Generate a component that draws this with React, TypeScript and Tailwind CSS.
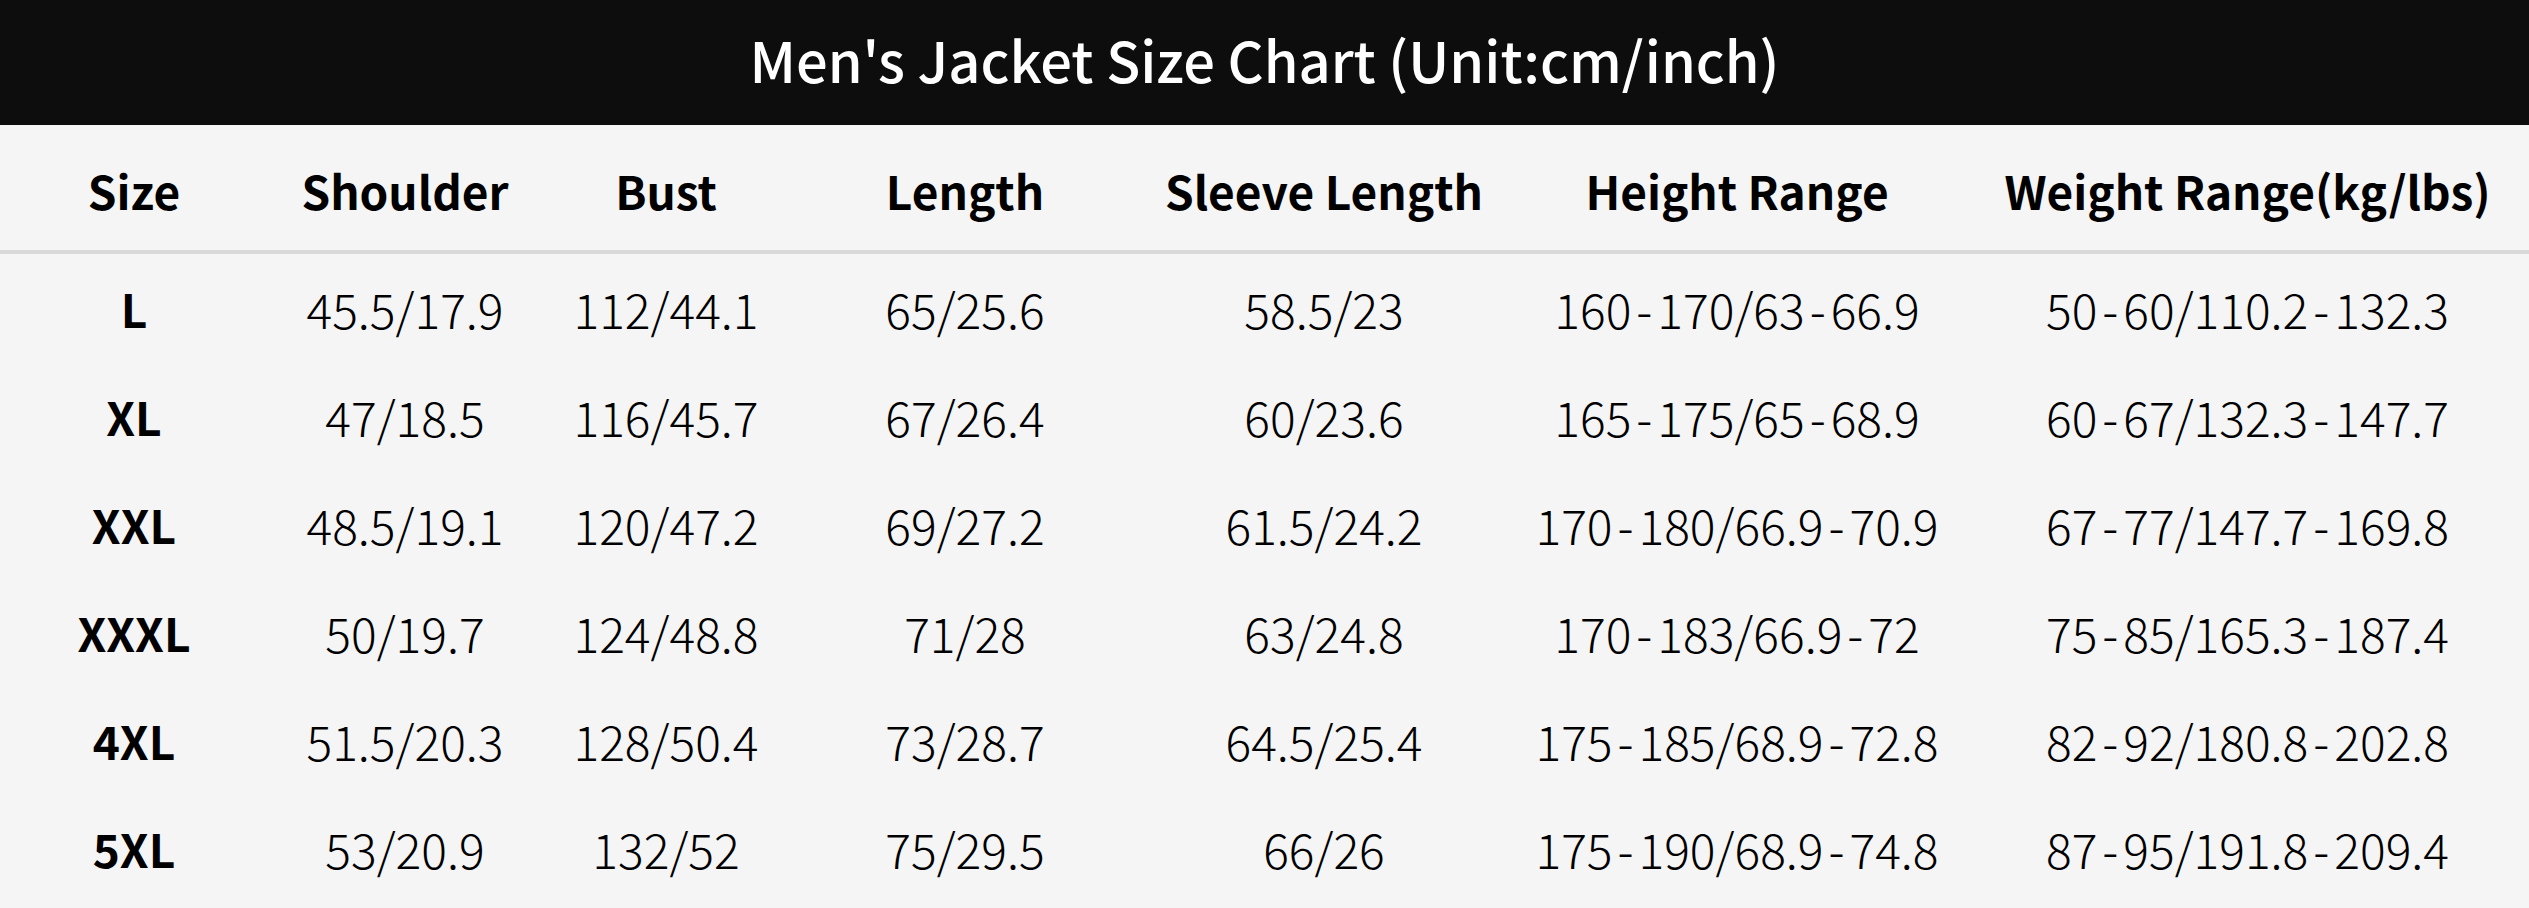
const COLS = ['Size', 'Shoulder', 'Bust', 'Length', 'Sleeve Length', 'Height Range', 'Weight Range(kg/lbs)'];

const ROWS: string[][] = [
  ['L', '45.5/17.9', '112/44.1', '65/25.6', '58.5/23', '160-170/63-66.9', '50-60/110.2-132.3'],
  ['XL', '47/18.5', '116/45.7', '67/26.4', '60/23.6', '165-175/65-68.9', '60-67/132.3-147.7'],
  ['XXL', '48.5/19.1', '120/47.2', '69/27.2', '61.5/24.2', '170-180/66.9-70.9', '67-77/147.7-169.8'],
  ['XXXL', '50/19.7', '124/48.8', '71/28', '63/24.8', '170-183/66.9-72', '75-85/165.3-187.4'],
  ['4XL', '51.5/20.3', '128/50.4', '73/28.7', '64.5/25.4', '175-185/68.9-72.8', '82-92/180.8-202.8'],
  ['5XL', '53/20.9', '132/52', '75/29.5', '66/26', '175-190/68.9-74.8', '87-95/191.8-209.4'],
];

const GRID = 'grid grid-cols-[268px_274px_248px_350px_368px_458px_1fr]';

// the chart's font sets dashes a bit wider than ours
function Value({ text }: { text: string }) {
  const parts = text.split('-');
  return (
    <>
      {parts.map((p, i) => (
        <span key={i}>
          {i > 0 && <span className="px-[5px]">-</span>}
          {p}
        </span>
      ))}
    </>
  );
}

export default function App() {
  return (
    <div className="w-[2529px] h-[908px] overflow-hidden bg-[#f5f5f5] text-black font-['Noto_Sans_CJK_SC','Noto_Sans',sans-serif]">
      {/* title bar */}
      <div className="h-[125px] bg-[#0d0d0d] flex items-center justify-center pb-[8px]">
        <h1 className="text-white text-[56px] font-medium leading-none">
          Men's Jacket Size Chart (Unit:cm/inch)
        </h1>
      </div>

      {/* column headers */}
      <div className={`${GRID} h-[129px] items-center border-b-4 border-[#d9d9d9]`}>
        {COLS.map((c) => (
          <div key={c} className="text-center text-[46px] font-bold leading-none whitespace-nowrap pt-1">
            {c}
          </div>
        ))}
      </div>

      {/* size rows */}
      {ROWS.map((r) => (
        <div key={r[0]} className={`${GRID} h-[108px] items-center`}>
          {r.map((v, i) =>
            i === 0 ? (
              <div key={i} className="text-center text-[46px] font-bold leading-none whitespace-nowrap">
                {v}
              </div>
            ) : (
              <div key={i} className="text-center text-[48px] font-light leading-none whitespace-nowrap">
                <Value text={v} />
              </div>
            )
          )}
        </div>
      ))}
    </div>
  );
}
